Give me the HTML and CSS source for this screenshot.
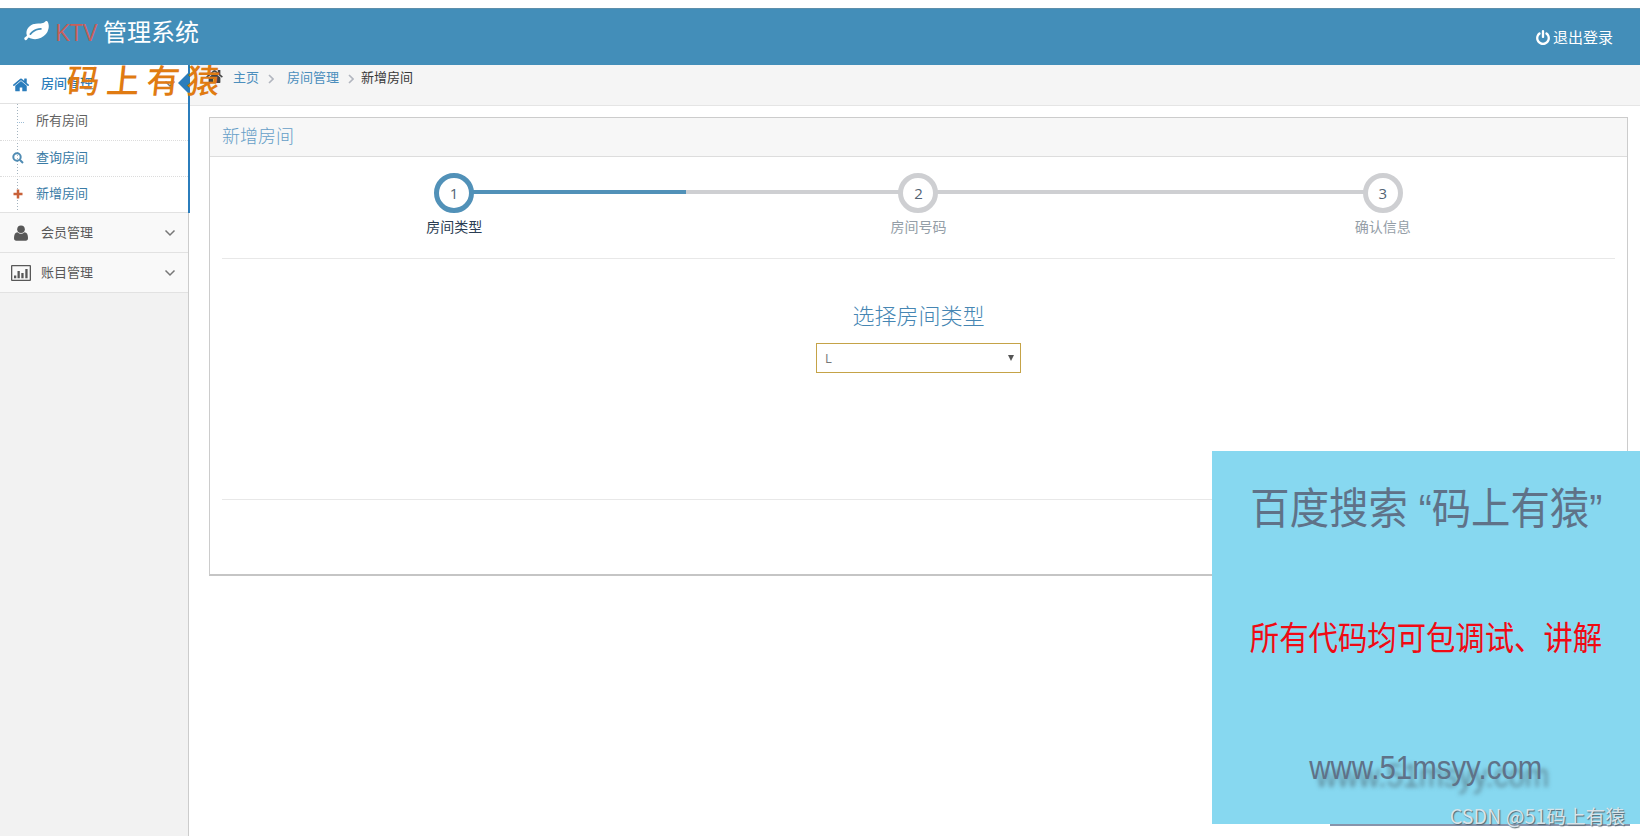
FILE: index.html
```html
<!DOCTYPE html>
<html lang="zh-CN">
<head>
    <meta charset="UTF-8">
    <title>KTV管理系统</title>
    <link rel="stylesheet" href="styles.css">
</head>
<body>
    <svg width="0" height="0" class="sprite">
        <symbol id="home" viewBox="64 200 1664 1400">
            <path d="M1472 992v480q0 26-19 45t-45 19h-384v-384h-256v384h-384q-26 0-45-19t-19-45v-480q0-1 .5-3t.5-3l575-474 575 474q1 2 1 6zm223-69l-62 74q-8 9-21 11h-3q-13 0-21-7l-692-577-692 577q-12 8-24 7-13-2-21-11l-62-74q-8-10-7-23.500t11-21.500l719-599q32-26 76-26t76 26l244 204v-195q0-14 9-23t23-9h192q14 0 23 9t9 23v408l219 182q10 8 11 21.500t-7 23.500z"/>
        </symbol>
    </svg>
    <div class="navbar">
        <div class="brand">
            <svg class="leaf" viewBox="0 128 1792 1536"><path d="M1280 704q0-26-19-45t-45-19q-172 0-318 49.500t-259.500 134-235.500 219.500q-19 21-19 45 0 26 19 45t45 19q24 0 45-19 27-24 74-71t67-66q137-124 268.500-176t313.500-52q26 0 45-19t19-45zm512-198q0 95-20 193-46 224-184.500 383t-357.500 268q-214 108-438 108-148 0-286-47-15-5-88-42t-96-37q-16 0-39.500 32t-45 70-52.500 70-60 32q-43 0-63.500-17.500t-45.500-59.500q-2-4-6-11t-5.500-10-3-9.500-1.500-13.500q0-35 31-73.500t68-65.500 68-56 31-48q0-4-14-38t-16-44q-9-51-9-104 0-115 43.500-220t119-184.500 170.500-139 204-95.500q55-18 145-25.500t179.500-9 178.500-6 163.500-24 113.500-56.500l29.500-29.500 29.500-28 27-20 36.500-16 43.500-4.500q39 0 70.500 46t47.500 112 24 124 8 96z"/></svg>
            <span class="red">KTV</span>
            <span>管理系统</span>
        </div>
        <a class="logout">
            <svg class="power" viewBox="128 0 1536 1664"><path d="M1664 896q0 156-61 298t-164 245-245 164-298 61-298-61-245-164-164-245-61-298q0-182 80.500-343t226.500-270q43-32 95.500-25t83.500 50q32 42 24.500 94.500t-49.500 84.500q-98 74-151.500 181t-53.500 228q0 104 40.500 198.500t109.500 163.500 163.500 109.500 198.500 40.500 198.500-40.500 163.500-109.500 109.500-163.500 40.500-198.500q0-121-53.500-228t-151.500-181q-42-32-49.500-84.500t24.500-94.500q31-43 84-50t95 25q146 109 226.500 270t80.500 343zm-640-768v640q0 52-38 90t-90 38-90-38-38-90v-640q0-52 38-90t90-38 90 38 38 90z"/></svg>
            <span>退出登录</span>
        </a>
    </div>
    <div class="main">
        <div class="sidebar">
            <div class="open">
                <div class="item active">
                    <svg class="icon" viewBox="0 0 20 16"><use href="#home" x="1.500" y="1" width="17" height="14"/></svg>
                    <span>房间管理</span>
                    <svg class="arrow" viewBox="0 0 12 8"><path d="M1.500 1.500L6 6l4.500-4.500"/></svg>
                </div>
                <div class="submenu">
                    <div class="sub"><i class="tick"></i><span>所有房间</span></div>
                    <div class="sub blue">
                        <svg class="sub-icon" viewBox="0 0 12 12"><circle cx="5" cy="5" r="3.700"/><path d="M8 8l3 3"/></svg>
                        <span>查询房间</span>
                    </div>
                    <div class="sub blue">
                        <svg class="sub-icon plus" viewBox="0 0 12 12"><path d="M6 1.500v9M1.500 6h9"/></svg>
                        <span>新增房间</span>
                    </div>
                </div>
            </div>
            <div class="item">
                <svg class="icon" viewBox="0 0 20 16"><path d="M6.500 7.200Q10 10.500 13.500 7.200Q17 7.500 17 13Q17 15.800 14.700 15.800H5.300Q3 15.800 3 13Q3 7.500 6.500 7.200z"/><circle cx="10" cy="4.200" r="3.800"/></svg>
                <span>会员管理</span>
                <svg class="arrow" viewBox="0 0 12 8"><path d="M1.500 1.500L6 6l4.500-4.500"/></svg>
            </div>
            <div class="item">
                <svg class="icon" viewBox="0 0 20 16"><path fill-rule="evenodd" d="M1 0h18q1 0 1 1v14q0 1-1 1H1q-1 0-1-1V1q0-1 1-1zM1.300 1.300v13.400h17.400V1.300zM3 10.500h2.300v2.800H3zM6.500 6h2.300v7.300H6.500zM10.300 8h2.300v5.300h-2.300zM14.300 4h2.300v9.300h-2.300z"/></svg>
                <span>账目管理</span>
                <svg class="arrow" viewBox="0 0 12 8"><path d="M1.500 1.500L6 6l4.500-4.500"/></svg>
            </div>
        </div>
        <div class="content">
            <div class="breadcrumb">
                <svg class="crumb-home" viewBox="0 0 17 15"><use href="#home" width="17" height="15"/></svg>
                <a>主页</a>
                <svg class="sep" viewBox="0 0 6 10"><path d="M1 1l4 4-4 4"/></svg>
                <a class="second">房间管理</a>
                <svg class="sep" viewBox="0 0 6 10"><path d="M1 1l4 4-4 4"/></svg>
                <span>新增房间</span>
            </div>
            <div class="widget">
                <div class="widget-header">新增房间</div>
                <div class="widget-body">
                    <div class="steps">
                        <div class="step current"><span class="num">1</span><span class="label">房间类型</span></div>
                        <div class="step"><span class="num">2</span><span class="label">房间号码</span></div>
                        <div class="step"><span class="num">3</span><span class="label">确认信息</span></div>
                    </div>
                    <div class="pane">
                        <h3>选择房间类型</h3>
                        <div class="select"><span>L</span><i class="caret"></i></div>
                    </div>
                </div>
            </div>
        </div>
    </div>
    <div class="pointer"></div>
    <div class="stamp">码上有猿</div>
    <div class="ad">
        <div class="ad-title">百度搜索 “码上有猿”</div>
        <div class="ad-text">所有代码均可包调试、讲解</div>
        <div class="ad-url">www.51msyy.com</div>
    </div>
    <div class="ad-line"></div>
    <div class="watermark">CSDN @51码上有猿</div>
</body>
</html>
```
FILE: styles.css
```css
* {
    padding: 0;
    margin: 0;
    box-sizing: border-box;
}

body {
    height: 836px;
    padding-top: 8px;
    overflow: hidden;
    position: relative;
    background: #fff;
    color: #393939;
    font-family: 'Open Sans', 'Noto Sans CJK SC', sans-serif;
    font-size: 13px;
    font-weight: 300;
    display: flex;
    flex-direction: column;
}

.sprite {
    position: absolute;
}

.navbar {
    height: 57px;
    flex: none;
    background: #438eb9;
    border-top: 1px solid #5d8fab;
    color: #fff;
    display: flex;
    justify-content: space-between;
    padding: 0 27px 0 24px;
}

.brand {
    display: flex;
    align-items: center;
    height: 45px;
    font-size: 24px;
    font-weight: 400;
    line-height: 44px;
}

.leaf {
    width: 25px;
    height: 21px;
    fill: #fff;
    margin-right: 6px;
}

.brand .red {
    color: #c85f5a;
    width: 48px;
}

.logout {
    display: flex;
    align-items: center;
    gap: 3px;
    height: 56px;
    font-size: 15px;
    font-weight: 400;
}

.logout span {
    margin-top: -1px;
}

.power {
    width: 14px;
    height: 15px;
    fill: #fff;
}

.main {
    flex: 1;
    display: flex;
}

.sidebar {
    width: 189px;
    flex: none;
    background: #f2f2f2;
    border-right: 1px solid #ccc;
}

.open {
    background: #fff;
    border-right: 2px solid #2b7dbc;
    margin-right: -2px;
    position: relative;
}

.item {
    height: 40px;
    display: flex;
    align-items: center;
    padding: 0 12px 0 11px;
    border-bottom: 1px solid #e2e2e2;
    background: #f9f9f9;
    color: #585858;
    font-weight: 400;
}

.item span {
    flex: 1;
    margin: -3px 0 0 10px;
}

.item.active {
    height: 39px;
    background: #fff;
    color: #2b7dbc;
    font-weight: 500;
}

.item.active span {
    margin-top: -4px;
}

.icon {
    width: 20px;
    height: 16px;
    fill: currentColor;
    margin-top: 1px;
}

.arrow {
    width: 12px;
    height: 8px;
    fill: none;
    stroke: #777;
    stroke-width: 1.5;
}

.submenu {
    background: linear-gradient(#a3b3bf 50%, transparent 50%) 17px 0 / 1px 3px repeat-y;
}

.sub {
    height: 36px;
    display: flex;
    align-items: center;
    padding-left: 12px;
    border-bottom: 1px dotted #dcdcdc;
    font-weight: 400;
    color: #616161;
}

.sub:first-child {
    height: 37px;
}

.sub:last-child {
    border-bottom: 1px solid #e2e2e2;
}

.sub.blue {
    color: #3a7ba5;
}

.sub span {
    margin: -5px 0 0 12px;
}

.tick {
    width: 7px;
    margin-left: 5px;
    border-top: 1px dotted #9dbdd6;
}

.sub-icon {
    width: 12px;
    height: 12px;
    fill: none;
    stroke: #4f8bb3;
    stroke-width: 2;
    margin-top: -1px;
}

.plus {
    stroke: #c86139;
    stroke-width: 2.5;
    margin-top: -2px;
}

.content {
    flex: 1;
}

.breadcrumb {
    height: 41px;
    background: #f5f5f5;
    border-bottom: 1px solid #e5e5e5;
    padding: 0 0 17px 17px;
    display: flex;
    align-items: center;
    font-weight: 400;
}

.breadcrumb a {
    color: #4c8fbd;
}

.crumb-home {
    width: 17px;
    height: 15px;
    fill: #444;
    margin-right: 10px;
}

.sep {
    width: 6px;
    height: 10px;
    margin: 4px 8px 0 9px;
    fill: none;
    stroke: #b2b6bf;
    stroke-width: 1.6;
}

.second {
    margin-left: 5px;
}

.breadcrumb > :last-child {
    margin-left: -1px;
}

.widget {
    height: 459px;
    margin: 11px 12px 0 20px;
    border: 1px solid #ccc;
    border-bottom: 2px solid #c5c5c5;
}

.widget-header {
    height: 39px;
    background: #f7f7f7;
    border-bottom: 1px solid #ddd;
    padding-left: 12px;
    font-size: 18px;
    line-height: 36px;
    color: #669fc7;
}

.widget-body {
    padding: 0 12px;
}

.steps {
    display: flex;
    height: 102px;
    padding-top: 16px;
    border-bottom: 1px solid #e8e8e8;
}

.step {
    flex: 1;
    display: flex;
    flex-direction: column;
    align-items: center;
    color: #949ea7;
    /* connecting line runs behind the circles */
    background: linear-gradient(#cecfd2, #cecfd2) 0 17px / 100% 4px no-repeat;
}

.step.current {
    color: #2b3d53;
    background: linear-gradient(#5191b8, #5191b8) 100% 17px / 50% 4px no-repeat;
}

.step:last-child {
    background-size: 50% 4px;
}

.num {
    width: 40px;
    height: 40px;
    border: 5px solid #cecfd2;
    border-radius: 50%;
    background: #fff;
    color: #546474;
    font-size: 15px;
    font-weight: 400;
    line-height: 30px;
    text-align: center;
}

.current .num {
    border-color: #5191b8;
}

.label {
    font-size: 14px;
    font-weight: 400;
    line-height: 20px;
    margin-top: 4px;
}

.pane {
    height: 241px;
    border-bottom: 1px solid #e8e8e8;
    padding-top: 40px;
    display: flex;
    flex-direction: column;
    align-items: center;
}

.pane h3 {
    font-size: 22px;
    font-weight: 300;
    line-height: 32px;
    color: #4686b3;
}

.select {
    width: 205px;
    height: 30px;
    margin-top: 12px;
    border: 1px solid #c5a347;
    padding: 0 6px 0 8px;
    display: flex;
    align-items: center;
    justify-content: space-between;
    color: #777;
    font-weight: 400;
}

.caret {
    border: 3px solid transparent;
    border-top: 6px solid #555;
    border-bottom: 0;
}

.pointer {
    position: absolute;
    left: 178px;
    top: 72px;
    width: 11px;
    height: 22px;
    background: #2b7dbc;
    clip-path: polygon(100% 0, 100% 100%, 0 50%);
}

.stamp {
    position: absolute;
    left: 67px;
    top: 58px;
    font-family: 'Noto Sans CJK SC', sans-serif;
    font-size: 33px;
    font-weight: 500;
    letter-spacing: 7px;
    line-height: 42px;
    white-space: nowrap;
    color: #e07b12;
    transform: skewX(-6deg);
}

.ad {
    position: absolute;
    left: 1212px;
    top: 451px;
    width: 428px;
    height: 373px;
    background: #87d8f0;
    color: #5f7288;
    font-family: 'Liberation Sans', 'Noto Sans CJK SC', sans-serif;
    font-weight: 400;
    white-space: nowrap;
    display: flex;
    flex-direction: column;
    align-items: center;
}

.ad-title {
    font-size: 43px;
    line-height: 60px;
    margin-top: 28px;
    transform: scaleX(0.915);
}

.ad-text {
    font-size: 33px;
    line-height: 48px;
    margin-top: 76px;
    color: #f00a14;
    transform: scaleX(0.89);
}

.ad-url {
    font-size: 34px;
    line-height: 40px;
    margin-top: 84px;
    text-shadow: 8px 8px 5px rgba(70, 90, 100, 0.6);
    transform: scaleX(0.865);
}

.ad-line {
    position: absolute;
    left: 1330px;
    top: 824px;
    width: 300px;
    height: 2px;
    background: #8794ab;
}

.watermark {
    position: absolute;
    right: 15px;
    top: 802px;
    font-family: 'Noto Sans CJK SC', sans-serif;
    font-size: 19.7px;
    font-weight: 400;
    line-height: 28px;
    white-space: nowrap;
    color: #d8e4ea;
    text-shadow: 1px 1px 1px #56656f;
}
```
